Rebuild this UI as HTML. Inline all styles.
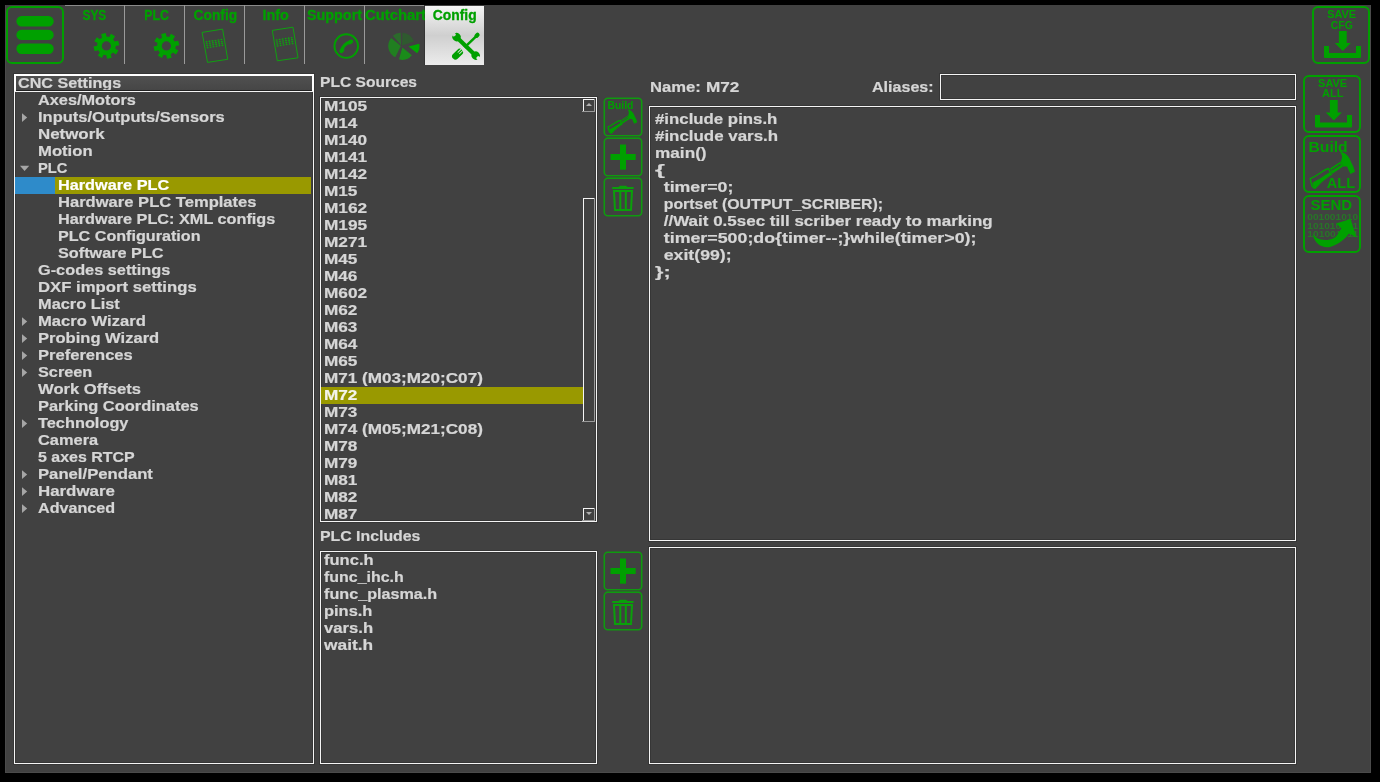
<!DOCTYPE html>
<html><head><meta charset="utf-8"><title>CNC Settings</title>
<style>
html,body{margin:0;padding:0;background:#000;width:1380px;height:782px;overflow:hidden}
svg{display:block;will-change:transform}
text{font-family:"Liberation Sans",sans-serif;font-weight:bold}
</style></head><body>
<svg width="1380" height="782" viewBox="0 0 1380 782">
<rect x="0" y="0" width="1380" height="782" fill="#000"/>
<rect x="5" y="5" width="1366" height="768" fill="#414141"/>
<rect x="5" y="5" width="1" height="768" fill="#4a4a4a"/>
<rect x="1370" y="5" width="1" height="768" fill="#4a4a4a"/>
<rect x="5" y="772" width="1366" height="1" fill="#4a4a4a"/>
<rect x="7" y="7" width="56" height="56" rx="5" fill="none" stroke="#00a000" stroke-width="2"/>
<rect x="16.4" y="16" width="37.3" height="10.4" rx="5.2" fill="#00a000"/>
<rect x="16.4" y="29.7" width="37.3" height="10.4" rx="5.2" fill="#00a000"/>
<rect x="16.4" y="43.5" width="37.3" height="10.4" rx="5.2" fill="#00a000"/>
<rect x="65" y="5" width="360" height="1" fill="#8a8a8a"/>
<rect x="124" y="5" width="1" height="59" fill="#9a9a9a"/>
<rect x="184" y="5" width="1" height="59" fill="#9a9a9a"/>
<rect x="244" y="5" width="1" height="59" fill="#9a9a9a"/>
<rect x="304" y="5" width="1" height="59" fill="#9a9a9a"/>
<rect x="364" y="5" width="1" height="59" fill="#9a9a9a"/>
<rect x="424" y="5" width="1" height="60" fill="#353535"/>
<defs><linearGradient id="tabg" x1="0" y1="0" x2="0" y2="1"><stop offset="0" stop-color="#f4f4f4"/><stop offset="0.5" stop-color="#cfcfcf"/><stop offset="1" stop-color="#ececec"/></linearGradient><linearGradient id="hdrg" x1="0" y1="0" x2="0" y2="1"><stop offset="0" stop-color="#505050"/><stop offset="1" stop-color="#464646"/></linearGradient></defs>
<text x="82.5" y="19.7" fill="#00a000" stroke="#00a000" stroke-width="0.3" font-size="14" textLength="23.80" lengthAdjust="spacingAndGlyphs">SYS</text>
<text x="144.3" y="19.7" fill="#00a000" stroke="#00a000" stroke-width="0.3" font-size="14" textLength="24.60" lengthAdjust="spacingAndGlyphs">PLC</text>
<text x="193.6" y="19.7" fill="#00a000" stroke="#00a000" stroke-width="0.3" font-size="14" textLength="43.60" lengthAdjust="spacingAndGlyphs">Config</text>
<text x="262.5" y="19.7" fill="#00a000" stroke="#00a000" stroke-width="0.3" font-size="14" textLength="26.40" lengthAdjust="spacingAndGlyphs">Info</text>
<text x="307.0" y="19.7" fill="#00a000" stroke="#00a000" stroke-width="0.3" font-size="14" textLength="55.00" lengthAdjust="spacingAndGlyphs">Support</text>
<text x="365.0" y="19.7" fill="#00a000" stroke="#00a000" stroke-width="0.3" font-size="14" textLength="61.00" lengthAdjust="spacingAndGlyphs">Cutchart</text>
<rect x="425" y="6" width="59" height="59" fill="url(#tabg)"/>
<text x="432.8" y="19.7" fill="#00a000" stroke="#00a000" stroke-width="0.3" font-size="14" textLength="43.80" lengthAdjust="spacingAndGlyphs">Config</text>
<path d="M113.92,40.43 L114.65,41.61 L118.18,40.64 L119.28,45.24 L115.70,45.97 L115.59,47.35 L115.27,48.70 L118.45,50.51 L115.98,54.54 L112.92,52.53 L111.87,53.42 L110.69,54.15 L111.66,57.68 L107.06,58.78 L106.33,55.20 L104.95,55.09 L103.60,54.77 L101.79,57.95 L97.76,55.48 L99.77,52.42 L98.88,51.37 L98.15,50.19 L94.62,51.16 L93.52,46.56 L97.10,45.83 L97.21,44.45 L97.53,43.10 L94.35,41.29 L96.82,37.26 L99.88,39.27 L100.93,38.38 L102.11,37.65 L101.14,34.12 L105.74,33.02 L106.47,36.60 L107.85,36.71 L109.20,37.03 L111.01,33.85 L115.04,36.32 L113.03,39.38 Z M111.0,45.9 A4.6,4.6 0 1,0 101.80000000000001,45.9 A4.6,4.6 0 1,0 111.0,45.9 Z" fill="#00a000" fill-rule="evenodd"/>
<path d="M173.92,40.43 L174.65,41.61 L178.18,40.64 L179.28,45.24 L175.70,45.97 L175.59,47.35 L175.27,48.70 L178.45,50.51 L175.98,54.54 L172.92,52.53 L171.87,53.42 L170.69,54.15 L171.66,57.68 L167.06,58.78 L166.33,55.20 L164.95,55.09 L163.60,54.77 L161.79,57.95 L157.76,55.48 L159.77,52.42 L158.88,51.37 L158.15,50.19 L154.62,51.16 L153.52,46.56 L157.10,45.83 L157.21,44.45 L157.53,43.10 L154.35,41.29 L156.82,37.26 L159.88,39.27 L160.93,38.38 L162.11,37.65 L161.14,34.12 L165.74,33.02 L166.47,36.60 L167.85,36.71 L169.20,37.03 L171.01,33.85 L175.04,36.32 L173.03,39.38 Z M171.0,45.9 A4.6,4.6 0 1,0 161.8,45.9 A4.6,4.6 0 1,0 171.0,45.9 Z" fill="#00a000" fill-rule="evenodd"/>
<path d="M202.1,32.4 L222.6,29.1 L227.7,59.3 L207.5,62.4 Z" fill="none" stroke="#10a010" stroke-width="1.0"/>
<ellipse cx="206.55" cy="41.87" rx="1.05" ry="0.8" fill="#10a010"/>
<ellipse cx="206.90" cy="43.82" rx="1.05" ry="0.8" fill="#10a010"/>
<ellipse cx="207.25" cy="45.77" rx="1.05" ry="0.8" fill="#10a010"/>
<ellipse cx="207.60" cy="47.72" rx="1.05" ry="0.8" fill="#10a010"/>
<ellipse cx="209.52" cy="41.39" rx="1.05" ry="0.8" fill="#10a010"/>
<ellipse cx="209.87" cy="43.34" rx="1.05" ry="0.8" fill="#10a010"/>
<ellipse cx="210.22" cy="45.29" rx="1.05" ry="0.8" fill="#10a010"/>
<ellipse cx="210.57" cy="47.24" rx="1.05" ry="0.8" fill="#10a010"/>
<ellipse cx="212.49" cy="40.91" rx="1.05" ry="0.8" fill="#10a010"/>
<ellipse cx="212.84" cy="42.86" rx="1.05" ry="0.8" fill="#10a010"/>
<ellipse cx="213.19" cy="44.81" rx="1.05" ry="0.8" fill="#10a010"/>
<ellipse cx="213.54" cy="46.76" rx="1.05" ry="0.8" fill="#10a010"/>
<ellipse cx="215.46" cy="40.44" rx="1.05" ry="0.8" fill="#10a010"/>
<ellipse cx="215.82" cy="42.39" rx="1.05" ry="0.8" fill="#10a010"/>
<ellipse cx="216.17" cy="44.34" rx="1.05" ry="0.8" fill="#10a010"/>
<ellipse cx="216.52" cy="46.29" rx="1.05" ry="0.8" fill="#10a010"/>
<ellipse cx="218.44" cy="39.96" rx="1.05" ry="0.8" fill="#10a010"/>
<ellipse cx="218.79" cy="41.91" rx="1.05" ry="0.8" fill="#10a010"/>
<ellipse cx="219.14" cy="43.86" rx="1.05" ry="0.8" fill="#10a010"/>
<ellipse cx="219.49" cy="45.81" rx="1.05" ry="0.8" fill="#10a010"/>
<ellipse cx="221.41" cy="39.48" rx="1.05" ry="0.8" fill="#10a010"/>
<ellipse cx="221.76" cy="41.43" rx="1.05" ry="0.8" fill="#10a010"/>
<ellipse cx="222.11" cy="43.38" rx="1.05" ry="0.8" fill="#10a010"/>
<ellipse cx="222.46" cy="45.33" rx="1.05" ry="0.8" fill="#10a010"/>
<path d="M272.3,30.4 L293.0,27.2 L298.0,57.8 L277.3,60.8 Z" fill="none" stroke="#10a010" stroke-width="1.0"/>
<ellipse cx="276.64" cy="40.02" rx="1.05" ry="0.8" fill="#10a010"/>
<ellipse cx="276.97" cy="41.99" rx="1.05" ry="0.8" fill="#10a010"/>
<ellipse cx="277.29" cy="43.97" rx="1.05" ry="0.8" fill="#10a010"/>
<ellipse cx="277.62" cy="45.94" rx="1.05" ry="0.8" fill="#10a010"/>
<ellipse cx="279.64" cy="39.55" rx="1.05" ry="0.8" fill="#10a010"/>
<ellipse cx="279.97" cy="41.53" rx="1.05" ry="0.8" fill="#10a010"/>
<ellipse cx="280.29" cy="43.50" rx="1.05" ry="0.8" fill="#10a010"/>
<ellipse cx="280.62" cy="45.48" rx="1.05" ry="0.8" fill="#10a010"/>
<ellipse cx="282.64" cy="39.09" rx="1.05" ry="0.8" fill="#10a010"/>
<ellipse cx="282.97" cy="41.06" rx="1.05" ry="0.8" fill="#10a010"/>
<ellipse cx="283.29" cy="43.04" rx="1.05" ry="0.8" fill="#10a010"/>
<ellipse cx="283.62" cy="45.02" rx="1.05" ry="0.8" fill="#10a010"/>
<ellipse cx="285.65" cy="38.62" rx="1.05" ry="0.8" fill="#10a010"/>
<ellipse cx="285.97" cy="40.60" rx="1.05" ry="0.8" fill="#10a010"/>
<ellipse cx="286.30" cy="42.58" rx="1.05" ry="0.8" fill="#10a010"/>
<ellipse cx="286.62" cy="44.55" rx="1.05" ry="0.8" fill="#10a010"/>
<ellipse cx="288.65" cy="38.16" rx="1.05" ry="0.8" fill="#10a010"/>
<ellipse cx="288.97" cy="40.14" rx="1.05" ry="0.8" fill="#10a010"/>
<ellipse cx="289.30" cy="42.11" rx="1.05" ry="0.8" fill="#10a010"/>
<ellipse cx="289.62" cy="44.09" rx="1.05" ry="0.8" fill="#10a010"/>
<ellipse cx="291.65" cy="37.70" rx="1.05" ry="0.8" fill="#10a010"/>
<ellipse cx="291.97" cy="39.67" rx="1.05" ry="0.8" fill="#10a010"/>
<ellipse cx="292.30" cy="41.65" rx="1.05" ry="0.8" fill="#10a010"/>
<ellipse cx="292.62" cy="43.62" rx="1.05" ry="0.8" fill="#10a010"/>
<circle cx="346.25" cy="46.05" r="11.75" fill="none" stroke="#00a000" stroke-width="2"/>
<path d="M341.6,50.6 Q343.2,44.2 350.6,41.8" fill="none" stroke="#00a000" stroke-width="3" stroke-linecap="round"/>
<ellipse cx="341.9" cy="50.4" rx="2.9" ry="2.1" transform="rotate(-60 341.9 50.4)" fill="#00a000"/>
<ellipse cx="350.5" cy="42.0" rx="2.9" ry="2.1" transform="rotate(-30 350.5 42.0)" fill="#00a000"/>
<path d="M402.0,45.4 L402.44,32.81 A12.6,12.6 0 0,1 413.98,41.51 Z" fill="#2f5a2f"/>
<path d="M401.09999999999997,45.3 L392.83,35.79 A12.6,12.6 0 0,1 400.66,32.71 Z" fill="#2b6b2b"/>
<path d="M400.8,46.0 L395.28,57.32 A12.6,12.6 0 0,1 391.15,37.90 Z" fill="#207f20"/>
<path d="M402.4,47.4 L411.90,55.37 A12.4,12.4 0 0,1 398.98,59.32 Z" fill="#1a8b1a"/>
<path d="M408.6,46.4 L419.19,43.84 A10.9,10.9 0 0,1 417.13,53.19 Z" fill="#00a800"/>
<mask id="wmask" maskUnits="userSpaceOnUse" x="440" y="20" width="60" height="60"><rect x="440" y="20" width="60" height="60" fill="#fff"/><g transform="translate(466.1 46.3) rotate(44)"><rect x="-22" y="-1.7" width="6.8" height="3.4" rx="1.2" fill="#000"/><rect x="15.2" y="-1.7" width="6.8" height="3.4" rx="1.2" fill="#000"/></g></mask>
<g mask="url(#wmask)" fill="#00a000"><g transform="translate(466.1 46.3) rotate(44)"><rect x="-12" y="-2.1" width="24" height="4.2"/><circle cx="-13.3" cy="0" r="4.1"/><circle cx="13.3" cy="0" r="4.1"/></g></g>
<g transform="translate(466.0 46.0) rotate(-44)" fill="#00a000"><rect x="-18" y="-3.3" width="12.5" height="6.6" rx="3.2"/><rect x="-2" y="-2.4" width="0.9" height="4.8"/><rect x="-0.5" y="-2.2" width="0.9" height="4.4"/><rect x="1" y="-1.25" width="13" height="2.5"/><rect x="12.5" y="-2.1" width="5.6" height="4.2" rx="2"/></g>
<g transform="translate(466.0 46.0) rotate(-44)" fill="url(#tabg)"><rect x="-10.5" y="-1.5" width="5.2" height="0.9"/><rect x="-10.5" y="0.6" width="5.2" height="0.9"/></g>
<rect x="1313" y="7" width="56" height="56" rx="5" fill="none" stroke="#00a000" stroke-width="2"/>
<text x="1327.2" y="18.4" fill="#00a000" font-size="11" textLength="28.9" lengthAdjust="spacingAndGlyphs">SAVE</text>
<text x="1330.8" y="28.8" fill="#00a000" font-size="11" textLength="22" lengthAdjust="spacingAndGlyphs">CFG</text>
<path d="M1338.8999999999999,31 L1346.7,31 L1346.7,43 L1350.8,43 L1342.8,51 L1334.8,43 L1338.8999999999999,43 Z" fill="#00a000"/>
<path d="M1324,46 L1329,46 L1329,53 L1356,53 L1356,46 L1361,46 L1361,57 Q1361,58 1360,58 L1325,58 Q1324,58 1324,57 Z" fill="#00a000"/>
<rect x="1304" y="76" width="56" height="56" rx="5" fill="none" stroke="#00a000" stroke-width="2"/>
<text x="1318.1" y="87.3" fill="#00a000" font-size="11" textLength="29" lengthAdjust="spacingAndGlyphs">SAVE</text>
<text x="1322.1" y="96.5" fill="#00a000" font-size="11" textLength="21.5" lengthAdjust="spacingAndGlyphs">ALL</text>
<path d="M1329.8999999999999,100 L1337.7,100 L1337.7,112.6 L1341.8,112.6 L1333.8,120.6 L1325.8,112.6 L1329.8999999999999,112.6 Z" fill="#00a000"/>
<path d="M1315,115 L1320,115 L1320,122.5 L1347,122.5 L1347,115 L1352,115 L1352,126.5 Q1352,127.5 1351,127.5 L1316,127.5 Q1315,127.5 1315,126.5 Z" fill="#00a000"/>
<rect x="1304" y="136" width="56" height="56" rx="5" fill="none" stroke="#00a000" stroke-width="2"/>
<text x="1308.5" y="151.8" fill="#00a000" font-size="14.5" textLength="39.2" lengthAdjust="spacingAndGlyphs">Build</text>
<text x="1326.8" y="188" fill="#00a000" font-size="15" textLength="28.2" lengthAdjust="spacingAndGlyphs">ALL</text>
<g transform=""><path d="M1310.22,178.67 C1313,177.5 1317.5,175 1320.63,172.76 C1323,171 1326,169.2 1328.51,168.54 L1331.32,174.45 C1328,176 1324,179.5 1320.07,182.89 C1318,184.8 1316.5,187 1315.0,188.24 C1313,187.5 1311.8,186 1311.63,184.58 C1311,182.5 1310.4,180.5 1310.22,178.67 Z" fill="none" stroke="#00a000" stroke-width="1.4"/><path d="M1312.5,182.8 C1315,181 1317.5,179.5 1320.07,178.39 C1323,176.5 1326.5,174 1329.64,172.2 L1331.32,174.45 C1328,176 1324,179.5 1320.07,182.89 C1318,184.8 1316.5,187 1315.0,188.24 C1313.8,187.6 1312.8,185.5 1312.5,182.8 Z" fill="#00a000"/><path d="M1330.2,168.26 L1340.89,161.46 L1343.14,166.57 L1331.89,173.89 Z" fill="#00a000"/><path d="M1331.3,169.7 L1340.3,163.8 L1340.9,164.9 L1331.9,170.8 Z" fill="#414141"/><path d="M1339.76,151.94 C1342,152 1344,152.6 1345.39,153.63 C1347,154.8 1348,156 1348.77,157.57 C1350,159.5 1350.5,160.8 1351.02,162.07 L1353.27,166.57 L1354.96,171.64 L1350.46,173.89 L1348.77,170.51 L1347.08,166.57 L1343.14,166.57 L1340.89,161.46 C1341.6,159.5 1342.1,158 1342.02,156.44 C1341.9,154.8 1341,153 1339.76,151.94 Z" fill="#00a000"/></g>
<rect x="1304" y="196" width="56" height="56" rx="5" fill="none" stroke="#00a000" stroke-width="2"/>
<text x="1310.5" y="210" fill="#00a000" font-size="14.5" textLength="41.5" lengthAdjust="spacingAndGlyphs">SEND</text>
<text x="1307.3" y="219.90" fill="#287428" font-size="9.6" textLength="50.8" lengthAdjust="spacingAndGlyphs">001001010</text>
<text x="1307.3" y="228.65" fill="#287428" font-size="9.6" textLength="50.8" lengthAdjust="spacingAndGlyphs">101010101</text>
<text x="1307.3" y="237.40" fill="#287428" font-size="9.6" textLength="50.8" lengthAdjust="spacingAndGlyphs">101001011</text>
<path d="M1312.4,233.6 C1316,240 1326,242 1334,238 C1337,236.5 1339.5,231 1341.4,228.3 L1336,223.4 L1350.6,218.9 L1356.5,237.4 L1349,233.6 C1345,239 1340,244 1330,247 C1322,248 1315,245 1312.4,233.6 Z" fill="#00a000"/>
<rect x="14" y="74" width="300" height="690" fill="#414141"/>
<rect x="14.5" y="74.5" width="299" height="689" fill="none" stroke="#363636" stroke-width="3"/>
<rect x="14" y="74" width="300" height="2" fill="#fff"/>
<rect x="14" y="74" width="2" height="17" fill="#fff"/>
<rect x="312" y="74" width="2" height="17" fill="#fff"/>
<rect x="16" y="76" width="296" height="14" fill="url(#hdrg)"/>
<rect x="16" y="90" width="296" height="1" fill="#222"/>
<rect x="14" y="91" width="300" height="1" fill="#f4f4f4"/>
<rect x="14" y="91" width="1" height="673" fill="#f4f4f4"/>
<rect x="313" y="91" width="1" height="673" fill="#f4f4f4"/>
<rect x="14" y="763" width="300" height="1" fill="#f4f4f4"/>
<clipPath id="hdrclip"><rect x="16" y="76" width="296" height="14"/></clipPath>
<g clip-path="url(#hdrclip)">
<text x="18" y="88" fill="#d6d6d6" stroke="#d6d6d6" stroke-width="0.2" font-size="14.4" textLength="103.22" lengthAdjust="spacingAndGlyphs" >CNC Settings</text>
</g>
<text x="38" y="105" fill="#d6d6d6" stroke="#d6d6d6" stroke-width="0.2" font-size="14.4" textLength="97.90" lengthAdjust="spacingAndGlyphs" >Axes/Motors</text>
<path d="M22,113.3 L27.2,117.6 L22,121.9 Z" fill="#a6a6a6"/>
<text x="38" y="122" fill="#d6d6d6" stroke="#d6d6d6" stroke-width="0.2" font-size="14.4" textLength="186.72" lengthAdjust="spacingAndGlyphs" >Inputs/Outputs/Sensors</text>
<text x="38" y="139" fill="#d6d6d6" stroke="#d6d6d6" stroke-width="0.2" font-size="14.4" textLength="66.67" lengthAdjust="spacingAndGlyphs" >Network</text>
<text x="38" y="156" fill="#d6d6d6" stroke="#d6d6d6" stroke-width="0.2" font-size="14.4" textLength="54.63" lengthAdjust="spacingAndGlyphs" >Motion</text>
<path d="M20,165.8 L29.2,165.8 L24.6,171 Z" fill="#a6a6a6"/>
<text x="38" y="173" fill="#d6d6d6" stroke="#d6d6d6" stroke-width="0.2" font-size="14.4" textLength="29.46" lengthAdjust="spacingAndGlyphs" >PLC</text>
<rect x="15" y="177" width="40" height="17" fill="#2e8bca"/>
<rect x="55" y="177" width="256" height="17" fill="#999900"/>
<text x="58" y="190" fill="#ffffff" stroke="#ffffff" stroke-width="0.2" font-size="14.4" textLength="111.20" lengthAdjust="spacingAndGlyphs" >Hardware PLC</text>
<text x="58" y="207" fill="#d6d6d6" stroke="#d6d6d6" stroke-width="0.2" font-size="14.4" textLength="198.50" lengthAdjust="spacingAndGlyphs" >Hardware PLC Templates</text>
<text x="58" y="224" fill="#d6d6d6" stroke="#d6d6d6" stroke-width="0.2" font-size="14.4" textLength="217.32" lengthAdjust="spacingAndGlyphs" >Hardware PLC: XML configs</text>
<text x="58" y="241" fill="#d6d6d6" stroke="#d6d6d6" stroke-width="0.2" font-size="14.4" textLength="142.50" lengthAdjust="spacingAndGlyphs" >PLC Configuration</text>
<text x="58" y="258" fill="#d6d6d6" stroke="#d6d6d6" stroke-width="0.2" font-size="14.4" textLength="105.59" lengthAdjust="spacingAndGlyphs" >Software PLC</text>
<text x="38" y="275" fill="#d6d6d6" stroke="#d6d6d6" stroke-width="0.2" font-size="14.4" textLength="132.28" lengthAdjust="spacingAndGlyphs" >G-codes settings</text>
<text x="38" y="292" fill="#d6d6d6" stroke="#d6d6d6" stroke-width="0.2" font-size="14.4" textLength="158.68" lengthAdjust="spacingAndGlyphs" >DXF import settings</text>
<text x="38" y="309" fill="#d6d6d6" stroke="#d6d6d6" stroke-width="0.2" font-size="14.4" textLength="81.82" lengthAdjust="spacingAndGlyphs" >Macro List</text>
<path d="M22,317.3 L27.2,321.6 L22,325.9 Z" fill="#a6a6a6"/>
<text x="38" y="326" fill="#d6d6d6" stroke="#d6d6d6" stroke-width="0.2" font-size="14.4" textLength="107.84" lengthAdjust="spacingAndGlyphs" >Macro Wizard</text>
<path d="M22,334.3 L27.2,338.6 L22,342.9 Z" fill="#a6a6a6"/>
<text x="38" y="343" fill="#d6d6d6" stroke="#d6d6d6" stroke-width="0.2" font-size="14.4" textLength="121.23" lengthAdjust="spacingAndGlyphs" >Probing Wizard</text>
<path d="M22,351.3 L27.2,355.6 L22,359.9 Z" fill="#a6a6a6"/>
<text x="38" y="360" fill="#d6d6d6" stroke="#d6d6d6" stroke-width="0.2" font-size="14.4" textLength="94.74" lengthAdjust="spacingAndGlyphs" >Preferences</text>
<path d="M22,368.3 L27.2,372.6 L22,376.9 Z" fill="#a6a6a6"/>
<text x="38" y="377" fill="#d6d6d6" stroke="#d6d6d6" stroke-width="0.2" font-size="14.4" textLength="54.24" lengthAdjust="spacingAndGlyphs" >Screen</text>
<text x="38" y="394" fill="#d6d6d6" stroke="#d6d6d6" stroke-width="0.2" font-size="14.4" textLength="103.09" lengthAdjust="spacingAndGlyphs" >Work Offsets</text>
<text x="38" y="411" fill="#d6d6d6" stroke="#d6d6d6" stroke-width="0.2" font-size="14.4" textLength="160.75" lengthAdjust="spacingAndGlyphs" >Parking Coordinates</text>
<path d="M22,419.3 L27.2,423.6 L22,427.9 Z" fill="#a6a6a6"/>
<text x="38" y="428" fill="#d6d6d6" stroke="#d6d6d6" stroke-width="0.2" font-size="14.4" textLength="90.46" lengthAdjust="spacingAndGlyphs" >Technology</text>
<text x="38" y="445" fill="#d6d6d6" stroke="#d6d6d6" stroke-width="0.2" font-size="14.4" textLength="60.16" lengthAdjust="spacingAndGlyphs" >Camera</text>
<text x="38" y="462" fill="#d6d6d6" stroke="#d6d6d6" stroke-width="0.2" font-size="14.4" textLength="96.66" lengthAdjust="spacingAndGlyphs" >5 axes RTCP</text>
<path d="M22,470.3 L27.2,474.6 L22,478.9 Z" fill="#a6a6a6"/>
<text x="38" y="479" fill="#d6d6d6" stroke="#d6d6d6" stroke-width="0.2" font-size="14.4" textLength="114.93" lengthAdjust="spacingAndGlyphs" >Panel/Pendant</text>
<path d="M22,487.3 L27.2,491.6 L22,495.9 Z" fill="#a6a6a6"/>
<text x="38" y="496" fill="#d6d6d6" stroke="#d6d6d6" stroke-width="0.2" font-size="14.4" textLength="76.87" lengthAdjust="spacingAndGlyphs" >Hardware</text>
<path d="M22,504.3 L27.2,508.6 L22,512.9 Z" fill="#a6a6a6"/>
<text x="38" y="513" fill="#d6d6d6" stroke="#d6d6d6" stroke-width="0.2" font-size="14.4" textLength="77.21" lengthAdjust="spacingAndGlyphs" >Advanced</text>
<text x="320" y="87" fill="#d6d6d6" stroke="#d6d6d6" stroke-width="0.2" font-size="14.4" textLength="97.03" lengthAdjust="spacingAndGlyphs" >PLC Sources</text>
<rect x="320.5" y="97.5" width="276" height="424" fill="none" stroke="#363636" stroke-width="3"/>
<rect x="320.5" y="97.5" width="276" height="424" fill="none" stroke="#f4f4f4" stroke-width="1"/>
<clipPath id="srcclip"><rect x="321" y="98" width="262" height="423"/></clipPath>
<g clip-path="url(#srcclip)">
<text x="324" y="111" fill="#d6d6d6" stroke="#d6d6d6" stroke-width="0.2" font-size="14.4" textLength="43.16" lengthAdjust="spacingAndGlyphs" >M105</text>
<text x="324" y="128" fill="#d6d6d6" stroke="#d6d6d6" stroke-width="0.2" font-size="14.4" textLength="33.41" lengthAdjust="spacingAndGlyphs" >M14</text>
<text x="324" y="145" fill="#d6d6d6" stroke="#d6d6d6" stroke-width="0.2" font-size="14.4" textLength="43.16" lengthAdjust="spacingAndGlyphs" >M140</text>
<text x="324" y="162" fill="#d6d6d6" stroke="#d6d6d6" stroke-width="0.2" font-size="14.4" textLength="43.16" lengthAdjust="spacingAndGlyphs" >M141</text>
<text x="324" y="179" fill="#d6d6d6" stroke="#d6d6d6" stroke-width="0.2" font-size="14.4" textLength="43.16" lengthAdjust="spacingAndGlyphs" >M142</text>
<text x="324" y="196" fill="#d6d6d6" stroke="#d6d6d6" stroke-width="0.2" font-size="14.4" textLength="33.41" lengthAdjust="spacingAndGlyphs" >M15</text>
<text x="324" y="213" fill="#d6d6d6" stroke="#d6d6d6" stroke-width="0.2" font-size="14.4" textLength="43.16" lengthAdjust="spacingAndGlyphs" >M162</text>
<text x="324" y="230" fill="#d6d6d6" stroke="#d6d6d6" stroke-width="0.2" font-size="14.4" textLength="43.16" lengthAdjust="spacingAndGlyphs" >M195</text>
<text x="324" y="247" fill="#d6d6d6" stroke="#d6d6d6" stroke-width="0.2" font-size="14.4" textLength="43.16" lengthAdjust="spacingAndGlyphs" >M271</text>
<text x="324" y="264" fill="#d6d6d6" stroke="#d6d6d6" stroke-width="0.2" font-size="14.4" textLength="33.41" lengthAdjust="spacingAndGlyphs" >M45</text>
<text x="324" y="281" fill="#d6d6d6" stroke="#d6d6d6" stroke-width="0.2" font-size="14.4" textLength="33.41" lengthAdjust="spacingAndGlyphs" >M46</text>
<text x="324" y="298" fill="#d6d6d6" stroke="#d6d6d6" stroke-width="0.2" font-size="14.4" textLength="43.16" lengthAdjust="spacingAndGlyphs" >M602</text>
<text x="324" y="315" fill="#d6d6d6" stroke="#d6d6d6" stroke-width="0.2" font-size="14.4" textLength="33.41" lengthAdjust="spacingAndGlyphs" >M62</text>
<text x="324" y="332" fill="#d6d6d6" stroke="#d6d6d6" stroke-width="0.2" font-size="14.4" textLength="33.41" lengthAdjust="spacingAndGlyphs" >M63</text>
<text x="324" y="349" fill="#d6d6d6" stroke="#d6d6d6" stroke-width="0.2" font-size="14.4" textLength="33.41" lengthAdjust="spacingAndGlyphs" >M64</text>
<text x="324" y="366" fill="#d6d6d6" stroke="#d6d6d6" stroke-width="0.2" font-size="14.4" textLength="33.41" lengthAdjust="spacingAndGlyphs" >M65</text>
<text x="324" y="383" fill="#d6d6d6" stroke="#d6d6d6" stroke-width="0.2" font-size="14.4" textLength="158.87" lengthAdjust="spacingAndGlyphs" >M71 (M03;M20;C07)</text>
<rect x="321" y="387" width="262" height="17" fill="#999900"/>
<text x="324" y="400" fill="#f4f4ea" stroke="#f4f4ea" stroke-width="0.2" font-size="14.4" textLength="33.41" lengthAdjust="spacingAndGlyphs" >M72</text>
<text x="324" y="417" fill="#d6d6d6" stroke="#d6d6d6" stroke-width="0.2" font-size="14.4" textLength="33.41" lengthAdjust="spacingAndGlyphs" >M73</text>
<text x="324" y="434" fill="#d6d6d6" stroke="#d6d6d6" stroke-width="0.2" font-size="14.4" textLength="158.87" lengthAdjust="spacingAndGlyphs" >M74 (M05;M21;C08)</text>
<text x="324" y="451" fill="#d6d6d6" stroke="#d6d6d6" stroke-width="0.2" font-size="14.4" textLength="33.41" lengthAdjust="spacingAndGlyphs" >M78</text>
<text x="324" y="468" fill="#d6d6d6" stroke="#d6d6d6" stroke-width="0.2" font-size="14.4" textLength="33.41" lengthAdjust="spacingAndGlyphs" >M79</text>
<text x="324" y="485" fill="#d6d6d6" stroke="#d6d6d6" stroke-width="0.2" font-size="14.4" textLength="33.41" lengthAdjust="spacingAndGlyphs" >M81</text>
<text x="324" y="502" fill="#d6d6d6" stroke="#d6d6d6" stroke-width="0.2" font-size="14.4" textLength="33.41" lengthAdjust="spacingAndGlyphs" >M82</text>
<text x="324" y="519" fill="#d6d6d6" stroke="#d6d6d6" stroke-width="0.2" font-size="14.4" textLength="33.41" lengthAdjust="spacingAndGlyphs" >M87</text>
</g>
<rect x="583" y="99" width="12" height="1" fill="#f4f4f4"/>
<rect x="583" y="99" width="1" height="12" fill="#f4f4f4"/>
<rect x="594" y="99" width="1" height="13" fill="#9a9a9a"/>
<rect x="582" y="111" width="13" height="1" fill="#9a9a9a"/>
<path d="M586,106 L592,106 L589,103 Z" fill="#b0b0b0"/>
<rect x="583" y="198" width="12" height="1" fill="#f4f4f4"/>
<rect x="583" y="198" width="1" height="223" fill="#f4f4f4"/>
<rect x="594" y="198" width="1" height="224" fill="#9a9a9a"/>
<rect x="582" y="421" width="13" height="1" fill="#9a9a9a"/>
<rect x="583" y="508" width="12" height="1" fill="#f4f4f4"/>
<rect x="583" y="508" width="1" height="12" fill="#f4f4f4"/>
<rect x="594" y="508" width="1" height="13" fill="#9a9a9a"/>
<rect x="582" y="520" width="13" height="1" fill="#9a9a9a"/>
<path d="M586,512 L592,512 L589,515 Z" fill="#b0b0b0"/>
<text x="320" y="541" fill="#d6d6d6" stroke="#d6d6d6" stroke-width="0.2" font-size="14.4" textLength="100.42" lengthAdjust="spacingAndGlyphs" >PLC Includes</text>
<rect x="320.5" y="551.5" width="276" height="212" fill="none" stroke="#363636" stroke-width="3"/>
<rect x="320.5" y="551.5" width="276" height="212" fill="none" stroke="#f4f4f4" stroke-width="1"/>
<text x="324" y="565" fill="#d6d6d6" stroke="#d6d6d6" stroke-width="0.2" font-size="14.4" textLength="49.61" lengthAdjust="spacingAndGlyphs" >func.h</text>
<text x="324" y="582" fill="#d6d6d6" stroke="#d6d6d6" stroke-width="0.2" font-size="14.4" textLength="79.67" lengthAdjust="spacingAndGlyphs" >func_ihc.h</text>
<text x="324" y="599" fill="#d6d6d6" stroke="#d6d6d6" stroke-width="0.2" font-size="14.4" textLength="113.24" lengthAdjust="spacingAndGlyphs" >func_plasma.h</text>
<text x="324" y="616" fill="#d6d6d6" stroke="#d6d6d6" stroke-width="0.2" font-size="14.4" textLength="48.41" lengthAdjust="spacingAndGlyphs" >pins.h</text>
<text x="324" y="633" fill="#d6d6d6" stroke="#d6d6d6" stroke-width="0.2" font-size="14.4" textLength="49.10" lengthAdjust="spacingAndGlyphs" >vars.h</text>
<text x="324" y="650" fill="#d6d6d6" stroke="#d6d6d6" stroke-width="0.2" font-size="14.4" textLength="49.16" lengthAdjust="spacingAndGlyphs" >wait.h</text>
<rect x="604.3" y="98.3" width="37.4" height="37.4" rx="3.5" fill="none" stroke="#0f9a0f" stroke-width="1.6"/>
<g transform="translate(608 109.6) scale(0.65) translate(-1310 -152)"><path d="M1310.22,178.67 C1313,177.5 1317.5,175 1320.63,172.76 C1323,171 1326,169.2 1328.51,168.54 L1331.32,174.45 C1328,176 1324,179.5 1320.07,182.89 C1318,184.8 1316.5,187 1315.0,188.24 C1313,187.5 1311.8,186 1311.63,184.58 C1311,182.5 1310.4,180.5 1310.22,178.67 Z" fill="none" stroke="#00a000" stroke-width="2.0"/><path d="M1312.5,182.8 C1315,181 1317.5,179.5 1320.07,178.39 C1323,176.5 1326.5,174 1329.64,172.2 L1331.32,174.45 C1328,176 1324,179.5 1320.07,182.89 C1318,184.8 1316.5,187 1315.0,188.24 C1313.8,187.6 1312.8,185.5 1312.5,182.8 Z" fill="#00a000"/><path d="M1330.2,168.26 L1340.89,161.46 L1343.14,166.57 L1331.89,173.89 Z" fill="#00a000"/><path d="M1331.3,169.7 L1340.3,163.8 L1340.9,164.9 L1331.9,170.8 Z" fill="#414141"/><path d="M1339.76,151.94 C1342,152 1344,152.6 1345.39,153.63 C1347,154.8 1348,156 1348.77,157.57 C1350,159.5 1350.5,160.8 1351.02,162.07 L1353.27,166.57 L1354.96,171.64 L1350.46,173.89 L1348.77,170.51 L1347.08,166.57 L1343.14,166.57 L1340.89,161.46 C1341.6,159.5 1342.1,158 1342.02,156.44 C1341.9,154.8 1341,153 1339.76,151.94 Z" fill="#00a000"/></g>
<text x="607.4" y="108.7" fill="#00a000" font-size="10" textLength="26" lengthAdjust="spacingAndGlyphs">Build</text>
<rect x="606" y="136.2" width="34" height="1.6" fill="#2f5f2f"/>
<rect x="604.3" y="138.3" width="37.4" height="37.4" rx="3.5" fill="none" stroke="#0f9a0f" stroke-width="1.6"/>
<rect x="610.5" y="154" width="25.2" height="6" fill="#00a000"/>
<rect x="620" y="144.5" width="6" height="25.2" fill="#00a000"/>
<rect x="606" y="176.2" width="34" height="1.6" fill="#2f5f2f"/>
<rect x="604.3" y="178.3" width="37.4" height="37.4" rx="3.5" fill="none" stroke="#0f9a0f" stroke-width="1.6"/>
<g fill="none" stroke="#0aa00a" stroke-width="2"><path d="M612.2,188 L633.6,188"/><path d="M614,191 L632,191 L631,210 L615,210 Z"/><path d="M620.3,191 L620.3,210 M625.8,191 L625.8,210"/></g>
<rect x="619" y="185.8" width="8" height="2" rx="1" fill="#0aa00a"/>
<rect x="604.3" y="552.3" width="37.4" height="37.4" rx="3.5" fill="none" stroke="#0f9a0f" stroke-width="1.6"/>
<rect x="610.5" y="568" width="25.2" height="6" fill="#00a000"/>
<rect x="620" y="558.5" width="6" height="25.2" fill="#00a000"/>
<rect x="606" y="590.2" width="34" height="1.6" fill="#2f5f2f"/>
<rect x="604.3" y="592.3" width="37.4" height="37.4" rx="3.5" fill="none" stroke="#0f9a0f" stroke-width="1.6"/>
<g fill="none" stroke="#0aa00a" stroke-width="2"><path d="M612.2,602 L633.6,602"/><path d="M614,605 L632,605 L631,624 L615,624 Z"/><path d="M620.3,605 L620.3,624 M625.8,605 L625.8,624"/></g>
<rect x="619" y="599.8" width="8" height="2" rx="1" fill="#0aa00a"/>
<text x="650" y="92" fill="#d6d6d6" stroke="#d6d6d6" stroke-width="0.2" font-size="14.4" textLength="50.85" lengthAdjust="spacingAndGlyphs" >Name:</text>
<text x="706" y="92" fill="#d6d6d6" stroke="#d6d6d6" stroke-width="0.2" font-size="14.4" textLength="33.41" lengthAdjust="spacingAndGlyphs" >M72</text>
<text x="872" y="92" fill="#d6d6d6" stroke="#d6d6d6" stroke-width="0.2" font-size="14.4" textLength="61.64" lengthAdjust="spacingAndGlyphs" >Aliases:</text>
<rect x="940.5" y="74.5" width="355" height="25" fill="none" stroke="#363636" stroke-width="3"/>
<rect x="940.5" y="74.5" width="355" height="25" fill="none" stroke="#f4f4f4" stroke-width="1"/>
<rect x="649.5" y="106.5" width="646" height="434" fill="none" stroke="#363636" stroke-width="3"/>
<rect x="649.5" y="106.5" width="646" height="434" fill="none" stroke="#f4f4f4" stroke-width="1"/>
<text x="655.0" y="124" fill="#d6d6d6" stroke="#d6d6d6" stroke-width="0.2" font-size="14.4" textLength="122.36" lengthAdjust="spacingAndGlyphs" >#include pins.h</text>
<text x="655.0" y="141" fill="#d6d6d6" stroke="#d6d6d6" stroke-width="0.2" font-size="14.4" textLength="123.05" lengthAdjust="spacingAndGlyphs" >#include vars.h</text>
<text x="655.0" y="158" fill="#d6d6d6" stroke="#d6d6d6" stroke-width="0.2" font-size="14.4" textLength="51.60" lengthAdjust="spacingAndGlyphs" >main()</text>
<text x="655.0" y="175" fill="#d6d6d6" stroke="#d6d6d6" stroke-width="0.2" font-size="14.4" textLength="9.97" lengthAdjust="spacingAndGlyphs" >{</text>
<text x="663.75" y="192" fill="#d6d6d6" stroke="#d6d6d6" stroke-width="0.2" font-size="14.4" textLength="69.55" lengthAdjust="spacingAndGlyphs" >timer=0;</text>
<text x="663.75" y="209" fill="#d6d6d6" stroke="#d6d6d6" stroke-width="0.2" font-size="14.4" textLength="219.39" lengthAdjust="spacingAndGlyphs" >portset (OUTPUT_SCRIBER);</text>
<text x="663.75" y="226" fill="#d6d6d6" stroke="#d6d6d6" stroke-width="0.2" font-size="14.4" textLength="328.97" lengthAdjust="spacingAndGlyphs" >//Wait 0.5sec till scriber ready to marking</text>
<text x="663.75" y="243" fill="#d6d6d6" stroke="#d6d6d6" stroke-width="0.2" font-size="14.4" textLength="312.64" lengthAdjust="spacingAndGlyphs" >timer=500;do{timer--;}while(timer&gt;0);</text>
<text x="663.75" y="260" fill="#d6d6d6" stroke="#d6d6d6" stroke-width="0.2" font-size="14.4" textLength="67.89" lengthAdjust="spacingAndGlyphs" >exit(99);</text>
<text x="655.0" y="277" fill="#d6d6d6" stroke="#d6d6d6" stroke-width="0.2" font-size="14.4" textLength="15.57" lengthAdjust="spacingAndGlyphs" >};</text>
<rect x="649.5" y="547.5" width="646" height="216" fill="none" stroke="#363636" stroke-width="3"/>
<rect x="649.5" y="547.5" width="646" height="216" fill="none" stroke="#f4f4f4" stroke-width="1"/>
</svg>
</body></html>
